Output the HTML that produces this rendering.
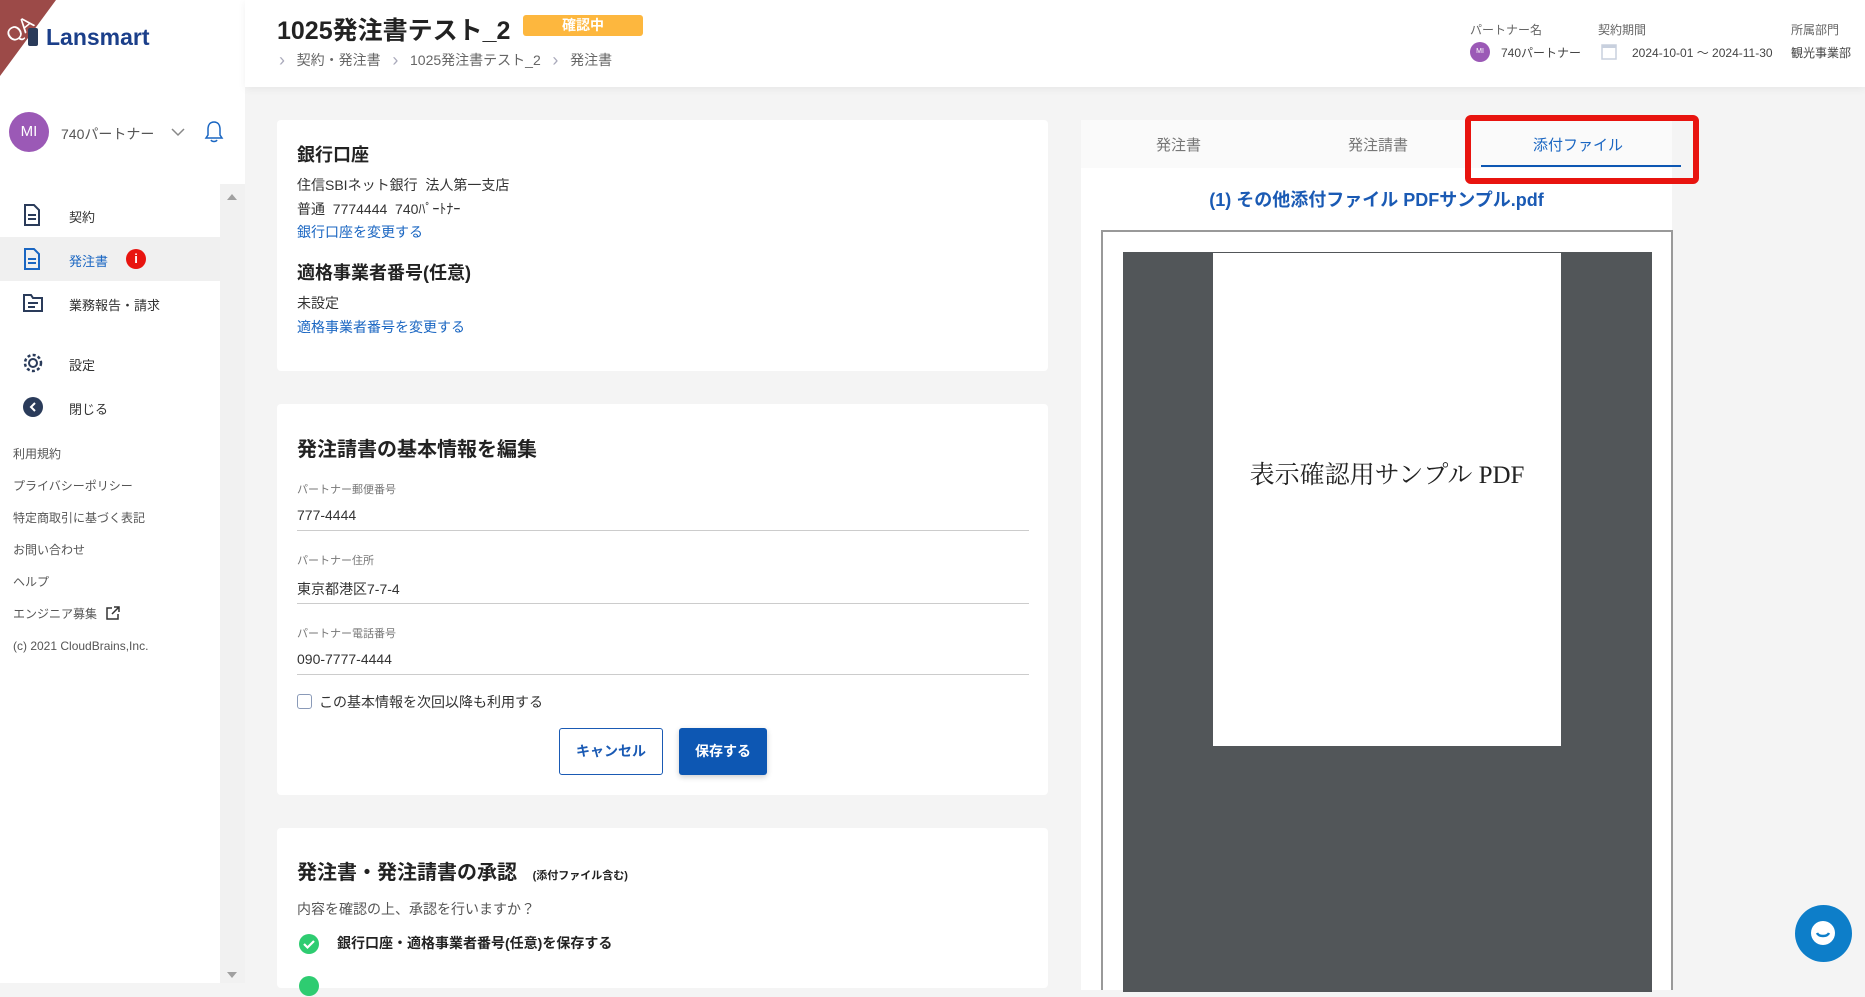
<!DOCTYPE html>
<html><head><meta charset="utf-8">
<style>
*{margin:0;padding:0;box-sizing:border-box}
body{width:1865px;height:983px;overflow:hidden;background:#f4f4f4;font-family:"Liberation Sans","Noto Sans CJK JP",sans-serif;color:#333;position:relative}
.a{position:absolute;white-space:nowrap}
.side{position:absolute;left:0;top:0;width:245px;height:983px;background:#fff}
.card{position:absolute;background:#fff;border-radius:4px}
.lbl{font-size:12px;color:#777}
.val{font-size:14px;color:#333}
.ln{position:absolute;left:297px;width:732px;height:1px;background:#ccc}
.blue{color:#1a66c2}
.chev{color:#aab;font-size:18px;vertical-align:-1px}
</style></head><body>
<div class="side"></div>
<!-- QA ribbon -->
<svg class="a" style="left:0;top:0" width="80" height="80"><polygon points="0,0 56,0 0,76" fill="#9c4a48"/><text x="6" y="36" fill="#fff" font-size="20" font-family="Liberation Sans" transform="rotate(-40 20 30)">QA</text></svg>
<div class="a" style="left:28px;top:28px;width:10px;height:18px;background:#2a3b5a;border-radius:2px"></div>
<div class="a" style="left:46px;top:24px;font-size:23px;font-weight:bold;color:#1b3f8a">Lansmart</div>
<!-- user -->
<div class="a" style="left:9px;top:112px;width:40px;height:40px;border-radius:50%;background:#9b59b6;color:#fff;font-size:15px;text-align:center;line-height:40px">MI</div>
<div class="a" style="left:61px;top:124px;font-size:14px;color:#555">740パートナー</div>
<svg class="a" style="left:170px;top:126px" width="16" height="12"><path d="M2 3l6 6 6-6" stroke="#888" fill="none" stroke-width="1.5"/></svg>
<svg class="a" style="left:203px;top:119px" width="22" height="26"><path d="M11 3c-4 0-6 3-6 7v6l-2 3h16l-2-3v-6c0-4-2-7-6-7z M8 21c1 2 5 2 6 0" stroke="#1a66c2" fill="none" stroke-width="1.5"/></svg>
<!-- scrollbar -->
<div class="a" style="left:220px;top:184px;width:25px;height:799px;background:#f1f1f1"></div>
<svg class="a" style="left:226px;top:192px" width="12" height="10"><path d="M1 8l5-6 5 6z" fill="#a0a0a0"/></svg>
<svg class="a" style="left:226px;top:970px" width="12" height="10"><path d="M1 2l5 6 5-6z" fill="#a0a0a0"/></svg>
<!-- nav -->
<div class="a" style="left:0;top:237px;width:220px;height:44px;background:#f0f0f0"></div>
<svg class="a" style="left:23px;top:204px" width="18" height="22"><path d="M2 1h9l5 5v15H2z M5 11h8 M5 15h8" stroke="#2a3b5a" fill="none" stroke-width="2"/></svg>
<div class="a" style="left:69px;top:207px;font-size:13px">契約</div>
<svg class="a" style="left:23px;top:248px" width="18" height="22"><path d="M2 1h9l5 5v15H2z M5 11h8 M5 15h8" stroke="#1a66c2" fill="none" stroke-width="2"/></svg>
<div class="a blue" style="left:69px;top:251px;font-size:13px">発注書</div>
<div class="a" style="left:126px;top:249px;width:20px;height:20px;border-radius:50%;background:#e8140f;color:#fff;font-size:13px;font-weight:bold;text-align:center;line-height:20px">i</div>
<svg class="a" style="left:22px;top:293px" width="22" height="20"><path d="M2 2h7l2 3h9v13H2z M6 10h10 M6 14h7" stroke="#2a3b5a" fill="none" stroke-width="2"/></svg>
<div class="a" style="left:69px;top:295px;font-size:13px">業務報告・請求</div>
<svg class="a" style="left:22px;top:352px" width="22" height="22"><circle cx="11" cy="11" r="4" stroke="#2a3b5a" fill="none" stroke-width="2"/><circle cx="11" cy="11" r="8" stroke="#2a3b5a" fill="none" stroke-width="2.5" stroke-dasharray="3 2.3"/></svg>
<div class="a" style="left:69px;top:355px;font-size:13px">設定</div>
<svg class="a" style="left:22px;top:396px" width="22" height="22"><circle cx="11" cy="11" r="10" fill="#2a3b5a"/><path d="M13 7l-4 4 4 4" stroke="#fff" fill="none" stroke-width="2"/></svg>
<div class="a" style="left:69px;top:399px;font-size:13px">閉じる</div>
<div class="a" style="left:13px;top:438px;font-size:12px;color:#555;line-height:32px">利用規約<br>プライバシーポリシー<br>特定商取引に基づく表記<br>お問い合わせ<br>ヘルプ<br>エンジニア募集 <svg width="14" height="14" style="margin-left:6px;vertical-align:-2px"><path d="M6 2H1v11h11V8 M8 1h5v5 M13 1L6 8" stroke="#333" fill="none" stroke-width="1.5"/></svg><br>(c) 2021 CloudBrains,Inc.</div>
<!-- header -->
<div class="a" style="left:245px;top:0;width:1620px;height:87px;background:#fff;box-shadow:0 2px 8px rgba(0,0,0,.06)"></div>
<div class="a" style="left:277px;top:11px;font-size:25px;font-weight:bold;color:#222">1025発注書テスト_2</div>
<div class="a" style="left:523px;top:15px;width:120px;height:21px;background:#fdb73e;border-radius:3px;color:#fff;font-size:14px;font-weight:bold;text-align:center;line-height:21px">確認中</div>
<div class="a" style="left:279px;top:50px;font-size:14px;color:#666"><span class="chev">›</span>&nbsp;&nbsp; 契約・発注書 &nbsp;&nbsp;<span class="chev">›</span>&nbsp;&nbsp; 1025発注書テスト_2 &nbsp;&nbsp;<span class="chev">›</span>&nbsp;&nbsp; 発注書</div>
<div class="a" style="left:1470px;top:21px;font-size:12px;color:#666">パートナー名</div>
<div class="a" style="left:1598px;top:21px;font-size:12px;color:#666">契約期間</div>
<div class="a" style="left:1791px;top:21px;font-size:12px;color:#666">所属部門</div>
<div class="a" style="left:1470px;top:42px;width:20px;height:20px;border-radius:50%;background:#9b59b6;color:#fff;font-size:7px;text-align:center;line-height:20px">MI</div>
<div class="a" style="left:1501px;top:44px;font-size:12px;color:#444">740パートナー</div>
<svg class="a" style="left:1601px;top:42px" width="16" height="18"><rect x="1" y="3" width="14" height="14" fill="none" stroke="#c8d0de" stroke-width="1.5"/><rect x="1" y="3" width="14" height="3" fill="#c8d0de"/></svg>
<div class="a" style="left:1632px;top:44px;font-size:12px;color:#444">2024-10-01 ～ 2024-11-30</div>
<div class="a" style="left:1791px;top:44px;font-size:12px;color:#444">観光事業部</div>
<!-- card1 -->
<div class="card" style="left:277px;top:120px;width:771px;height:251px"></div>
<div class="a" style="left:297px;top:141px;font-size:18px;font-weight:bold;color:#222">銀行口座</div>
<div class="a val" style="left:297px;top:175px">住信SBIネット銀行&nbsp; 法人第一支店</div>
<div class="a val" style="left:297px;top:199px">普通&nbsp; 7774444&nbsp; 740ﾊﾟｰﾄﾅｰ</div>
<div class="a blue" style="left:297px;top:222px;font-size:14px">銀行口座を変更する</div>
<div class="a" style="left:297px;top:259px;font-size:18px;font-weight:bold;color:#222">適格事業者番号(任意)</div>
<div class="a val" style="left:297px;top:293px">未設定</div>
<div class="a blue" style="left:297px;top:317px;font-size:14px">適格事業者番号を変更する</div>
<!-- card2 -->
<div class="card" style="left:277px;top:404px;width:771px;height:391px"></div>
<div class="a" style="left:297px;top:433px;font-size:20px;font-weight:bold;color:#222">発注請書の基本情報を編集</div>
<div class="a lbl" style="left:297px;top:481px;font-size:11px">パートナー郵便番号</div>
<div class="a val" style="left:297px;top:507px">777-4444</div><div class="ln" style="top:530px"></div>
<div class="a lbl" style="left:297px;top:552px;font-size:11px">パートナー住所</div>
<div class="a val" style="left:297px;top:579px">東京都港区7-7-4</div><div class="ln" style="top:603px"></div>
<div class="a lbl" style="left:297px;top:625px;font-size:11px">パートナー電話番号</div>
<div class="a val" style="left:297px;top:651px">090-7777-4444</div><div class="ln" style="top:674px"></div>
<div class="a" style="left:297px;top:694px;width:15px;height:15px;border:1.5px solid #8a9ab8;border-radius:3px"></div>
<div class="a val" style="left:319px;top:692px">この基本情報を次回以降も利用する</div>
<div class="a" style="left:559px;top:728px;width:104px;height:47px;border:1px solid #1a5ab4;border-radius:3px;color:#1a5ab4;font-size:14px;font-weight:bold;text-align:center;line-height:45px;background:#fff">キャンセル</div>
<div class="a" style="left:679px;top:728px;width:88px;height:47px;background:#0d57b3;border-radius:3px;color:#fff;font-size:14px;font-weight:bold;text-align:center;line-height:47px;box-shadow:0 2px 6px rgba(0,0,0,.2)">保存する</div>
<!-- card3 -->
<div class="card" style="left:277px;top:828px;width:771px;height:160px"></div>
<div class="a" style="left:297px;top:856px;font-size:20px;font-weight:bold;color:#222">発注書・発注請書の承認 <span style="font-size:11px;margin-left:10px">(添付ファイル含む)</span></div>
<div class="a val" style="left:297px;top:899px;color:#555">内容を確認の上、承認を行いますか？</div>
<svg class="a" style="left:298px;top:933px" width="22" height="22"><circle cx="11" cy="11" r="10" fill="#2ecc71"/><path d="M6 11l3.5 3.5L16 8" stroke="#fff" fill="none" stroke-width="2.2"/></svg>
<div class="a" style="left:337px;top:933px;font-size:14px;font-weight:bold;color:#222">銀行口座・適格事業者番号(任意)を保存する</div>
<svg class="a" style="left:298px;top:975px" width="22" height="22"><circle cx="11" cy="11" r="10" fill="#2ecc71"/></svg>
<!-- right panel -->
<div class="card" style="left:1081px;top:120px;width:591px;height:870px;border-radius:0"></div>
<div class="a" style="left:1081px;top:120px;width:591px;height:48px;background:#fafafa"></div>
<div class="a" style="left:1156px;top:134px;font-size:15px;color:#777">発注書</div>
<div class="a" style="left:1348px;top:134px;font-size:15px;color:#777">発注請書</div>
<div class="a blue" style="left:1533px;top:134px;font-size:15px">添付ファイル</div>
<div class="a" style="left:1481px;top:165px;width:200px;height:2px;background:#0d57b3"></div>
<div class="a" style="left:1465px;top:115px;width:234px;height:69px;border:6px solid #e8140f;border-radius:6px"></div>
<div class="a" style="left:1081px;top:186px;width:591px;text-align:center;font-size:18px;font-weight:bold;color:#1a5ab4">(1) その他添付ファイル PDFサンプル.pdf</div>
<div class="a" style="left:1101px;top:230px;width:572px;height:760px;border:2px solid #999;border-bottom:none;background:#fff"></div>
<div class="a" style="left:1123px;top:252px;width:529px;height:740px;background:#525659"></div>
<div class="a" style="left:1213px;top:253px;width:348px;height:493px;background:#fff"></div>
<div class="a" style="left:1213px;top:455px;width:348px;text-align:center;font-family:'Liberation Serif','Noto Serif CJK SC',serif;font-size:25px;color:#222">表示確認用サンプル PDF</div>
<!-- chat -->
<div class="a" style="left:1795px;top:905px;width:57px;height:57px;border-radius:50%;background:#0d7ec9"></div>
<svg class="a" style="left:1806px;top:916px" width="35" height="35"><circle cx="17" cy="17" r="12" fill="#fff"/><path d="M11 17c2 4 10 4 12 0" stroke="#0d7ec9" fill="none" stroke-width="2.5"/></svg>
</body></html>
